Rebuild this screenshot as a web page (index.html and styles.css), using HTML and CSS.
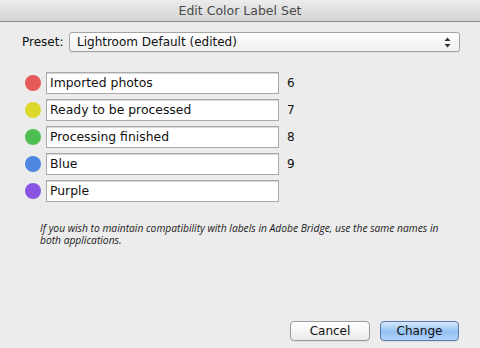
FILE: index.html
```html
<!DOCTYPE html>
<html lang="en">
<head>
    <meta charset="UTF-8">
    <title>Edit Color Label Set</title>
    <link rel="stylesheet" href="styles.css">
</head>
<body>
    <div class="window">
        <div class="titlebar">Edit Color Label Set</div>

        <div class="content">
            <div class="preset-row">
                <span class="preset-label">Preset:</span>
                <div class="select">
                    <span>Lightroom Default (edited)</span>
                    <svg class="arrows" width="7" height="11" viewBox="0 0 7 11">
                        <path d="M3.5 0.5 L6.5 4 L0.5 4 Z" fill="#333"/>
                        <path d="M3.5 10.5 L6.5 7 L0.5 7 Z" fill="#333"/>
                    </svg>
                </div>
            </div>

            <!-- Etiquetas -->
            <div class="labels">
                <div class="label-row">
                    <span class="dot red"></span>
                    <div class="field">Imported photos</div>
                    <span class="key">6</span>
                </div>
                <div class="label-row">
                    <span class="dot yellow"></span>
                    <div class="field">Ready to be processed</div>
                    <span class="key">7</span>
                </div>
                <div class="label-row">
                    <span class="dot green"></span>
                    <div class="field">Processing finished</div>
                    <span class="key">8</span>
                </div>
                <div class="label-row">
                    <span class="dot blue"></span>
                    <div class="field">Blue</div>
                    <span class="key">9</span>
                </div>
                <div class="label-row">
                    <span class="dot purple"></span>
                    <div class="field">Purple</div>
                    <span class="key"></span>
                </div>
            </div>

            <p class="note">If you wish to maintain compatibility with labels in Adobe Bridge, use the same names in both applications.</p>

            <div class="buttons">
                <button class="btn">Cancel</button>
                <button class="btn primary">Change</button>
            </div>
        </div>
    </div>
</body>
</html>
```

FILE: styles.css
```css
body {
    margin: 0;
    font-family: "DejaVu Sans", sans-serif;
    color: #111;
    background: #ececec;
}

.window {
    width: 480px;
    height: 348px;
    background: #ececec;
    overflow: hidden;
}

.titlebar {
    height: 21px;
    line-height: 21px;
    text-align: center;
    font-size: 12.5px;
    color: #4a4a4a;
    background: linear-gradient(#ececec, #d4d4d4);
    border-bottom: 1px solid #8e8e8e;
    border-radius: 4px 4px 0 0;
}

.content {
    padding: 10px 20px 0 22px;
}

.preset-row {
    display: flex;
    align-items: center;
    height: 20px;
}

.preset-label {
    font-size: 12px;
    width: 47px;
}

.select {
    flex: 1;
    height: 18px;
    display: flex;
    align-items: center;
    justify-content: space-between;
    padding: 0 8px 0 7px;
    font-size: 12px;
    border: 1px solid #a3a3a3;
    border-radius: 3px;
    background: linear-gradient(#ffffff, #f0f0f0);
    box-shadow: 0 1px 0 rgba(0,0,0,0.05);
}

.arrows {
    display: block;
}

.labels {
    margin-top: 20px;
    margin-left: 3px;
    display: flex;
    flex-direction: column;
    gap: 5px;
}

.label-row {
    display: flex;
    align-items: center;
    height: 22px;
}

.dot {
    width: 16px;
    height: 16px;
    border-radius: 50%;
    margin-right: 5px;
}

.red { background: #e65a5a; }
.yellow { background: #dcd82c; }
.green { background: #4fbe52; }
.blue { background: #4f86e0; }
.purple { background: #8a55e2; }

.field {
    width: 228px;
    height: 20px;
    line-height: 20px;
    padding-left: 3px;
    font-size: 12.4px;
    background: #fff;
    border: 1px solid #a9a9a9;
    box-shadow: inset 0 1px 0 #d8d8d8;
}

.key {
    margin-left: 8px;
    font-size: 12px;
}

.note {
    margin: 20px 0 0 18px;
    width: 408px;
    font-family: "Open Sans", sans-serif;
    font-style: italic;
    font-size: 10.25px;
    line-height: 12px;
    color: #1a1a1a;
}

.buttons {
    display: flex;
    justify-content: flex-end;
    gap: 10px;
    margin-top: 75px;
    padding-right: 1px;
}

.btn {
    width: 80px;
    height: 20px;
    padding: 0;
    font-family: "DejaVu Sans", sans-serif;
    font-size: 12px;
    color: #111;
    border: 1px solid #9a9a9a;
    border-radius: 4px;
    background: linear-gradient(#ffffff, #ebebeb);
    box-shadow: 0 1px 0 rgba(0,0,0,0.06);
}

.btn.primary {
    width: 79px;
    border-color: #5a7bb0;
    background: linear-gradient(#d6e8fc, #93c0f3 55%, #b0d4fa);
}
```
